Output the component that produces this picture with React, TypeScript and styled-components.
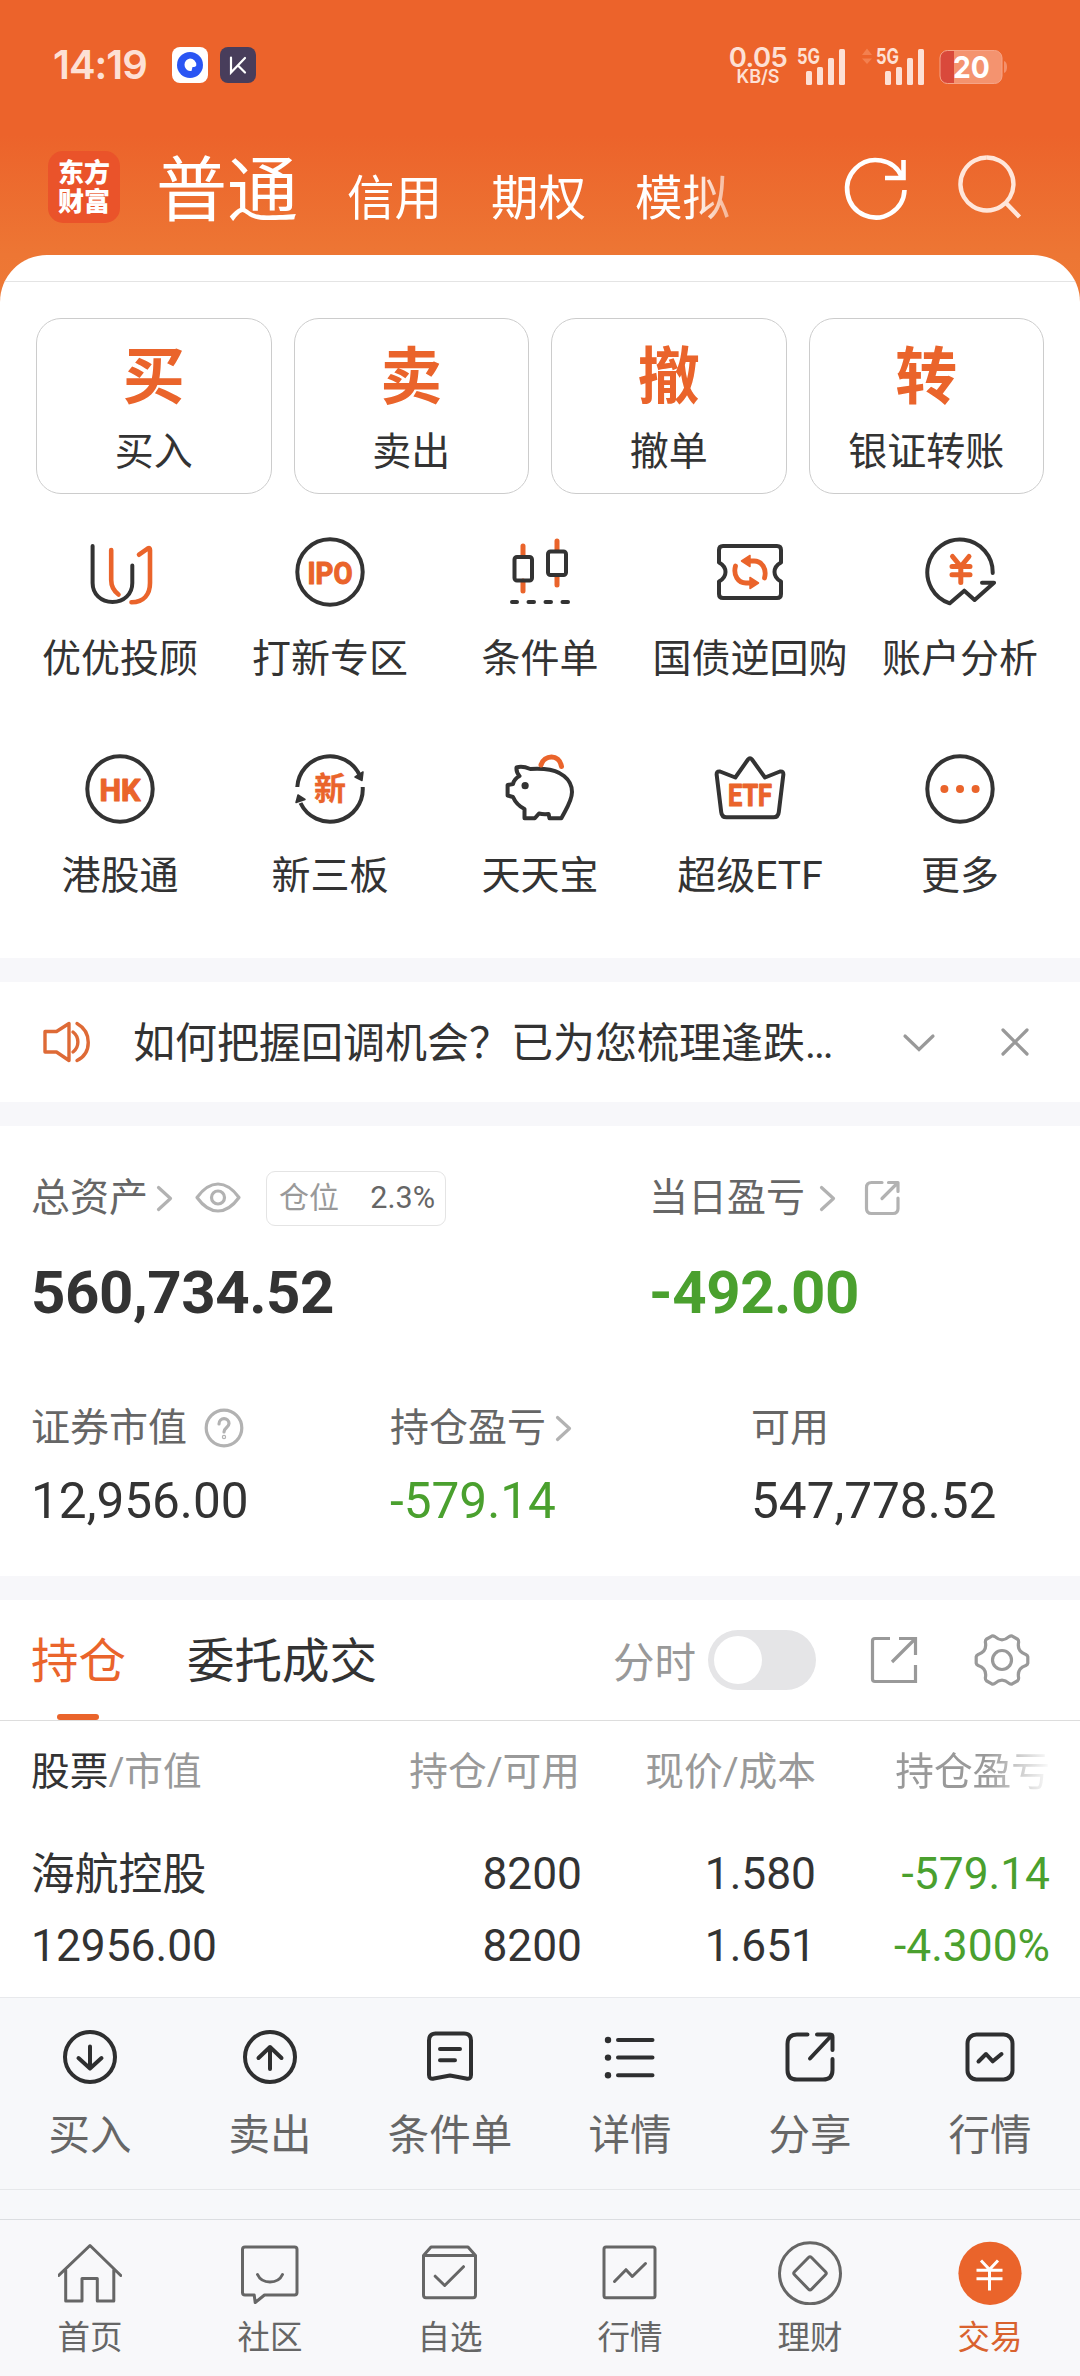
import React from "react";
import styled, { createGlobalStyle, css } from "styled-components";

const ORANGE = "#ea642b";
const INK = "#333";
const GREEN = "#4aa02e";

const Global = createGlobalStyle`
  * { box-sizing: border-box; }
  body {
    margin: 0;
    background: #f8f8fa;
    color: ${INK};
    font-family: Roboto, "Noto Sans CJK SC", sans-serif;
  }
`;

const Page = styled.div`
  width: 1080px;
  height: 2376px;
  display: flex;
  flex-direction: column;
  overflow: hidden;
  background: linear-gradient(#ec632b 0, #ec632b 135px, #ed7634 255px, #ee7a36 310px, #f8f8fa 311px);
`;

/* ---------- status bar ---------- */

const StatusBar = styled.div`
  height: 130px;
  padding: 0 73px 0 53px;
  display: flex;
  align-items: center;
  justify-content: space-between;
  color: #fde0d5;
  font-family: Inter, sans-serif;
`;

const StatusGroup = styled.div`
  display: flex;
  align-items: center;
`;

const Clock = styled.span`
  width: 119px;
  font-size: 40px;
  line-height: 40px;
  font-weight: 600;
  letter-spacing: -1px;
`;

const AppBadge = styled.svg`
  width: 36px;
  height: 36px;
  margin-right: 12px;
`;

const NetSpeed = styled.div`
  width: 64px;
  display: flex;
  flex-direction: column;
  align-items: center;
  font-weight: 600;
`;

const SpeedValue = styled.span`
  font-size: 27.5px;
  line-height: 22px;
  letter-spacing: -0.6px;
`;

const SpeedUnit = styled.span`
  font-size: 18px;
  line-height: 17px;
`;

const SignalIcon = styled.svg<{ $gap: number }>`
  width: 64px;
  height: 40px;
  margin-left: ${(p) => p.$gap}px;
  overflow: visible;
`;

const Battery = styled.svg`
  width: 68px;
  height: 40px;
  margin-left: 14px;
  overflow: visible;
`;

/* ---------- header ---------- */

const Header = styled.header`
  height: 125px;
  padding: 0 56px 0 48px;
  display: flex;
  align-items: flex-start;
`;

const Logo = styled.div`
  flex: none;
  width: 72px;
  height: 72px;
  margin-top: 21px;
  padding-top: 8px;
  border-radius: 15px;
  background: #ea532a;
  color: #fff;
  text-align: center;
  font-size: 26px;
  line-height: 29px;
  font-weight: 900;
`;

const HeaderTabs = styled.nav`
  width: 681px;
  flex: none;
  margin-left: 36px;
  padding-top: 16px;
  display: flex;
  align-items: baseline;
  color: #fff;
  mask-image: linear-gradient(to right, #000 535px, transparent 610px);
`;

const HeaderTab = styled.span<{ $active?: boolean }>`
  font-size: ${(p) => (p.$active ? 71 : 47.5)}px;
  line-height: 90px;
  margin-right: ${(p) => (p.$active ? 49 : 49)}px;
  white-space: nowrap;
`;

const HeaderIcon = styled.svg<{ $left: number }>`
  flex: none;
  width: 72px;
  height: 72px;
  margin-top: 23px;
  margin-left: ${(p) => p.$left}px;
`;

/* ---------- shared sheet parts ---------- */

const Sheet = styled.main`
  height: 1742px;
  flex: none;
  border-radius: 47px 47px 0 0;
  overflow: hidden;
  background: #fff;
`;

const TopEdge = styled.div`
  height: 27px;
  border-bottom: 1px solid #e4e4e4;
`;

const Band = styled.div`
  height: 24px;
  background: #f7f7fa;
`;

/* ---------- primary actions ---------- */

const ActionRow = styled.section`
  display: grid;
  grid-template-columns: repeat(4, 1fr);
  gap: 22px;
  padding: 36px 36px 0;
`;

const ActionCard = styled.button`
  height: 176px;
  padding: 24px 0 0;
  border: 1px solid #ccc;
  border-radius: 25px;
  background: #fff;
  color: ${INK};
  font-family: inherit;
  display: flex;
  flex-direction: column;
  align-items: center;
`;

const ActionGlyph = styled.span`
  color: ${ORANGE};
  font-size: 62px;
  line-height: 70px;
  font-weight: 700;
`;

const ActionLabel = styled.span`
  margin-top: 17px;
  font-size: 39px;
  line-height: 44px;
`;

const ShortcutGrid = styled.section`
  height: 464px;
  padding: 42px 15px 0;
  display: grid;
  grid-template-columns: repeat(5, 210px);
  grid-auto-rows: 217px;
`;

const Shortcut = styled.div`
  display: flex;
  flex-direction: column;
  align-items: center;
`;

const ShortcutIcon = styled.svg`
  width: 72px;
  height: 72px;
  fill: none;
  stroke: ${INK};
  stroke-width: 4;
  stroke-linecap: round;
  stroke-linejoin: round;
`;

const ShortcutLabel = styled.span`
  margin-top: 29px;
  font-size: 39px;
  line-height: 44px;
  white-space: nowrap;
`;

const IconWord = styled.text<{ $outline: number }>`
  fill: ${ORANGE};
  stroke: ${ORANGE};
  stroke-width: ${(p) => p.$outline};
  font-weight: 700;
  text-anchor: middle;
`;

/* ---------- notice ---------- */

const Notice = styled.section`
  height: 120px;
  padding: 0 48px 0 42px;
  display: flex;
  align-items: center;
`;

const NoticeIcon = styled.svg`
  flex: none;
  width: 48px;
  height: 48px;
`;

const NoticeText = styled.span`
  width: 768px;
  flex: none;
  margin-left: 43px;
  padding-top: 3px;
  font-size: 42px;
  line-height: 60px;
  white-space: nowrap;
`;

const Dots = styled.span`
  letter-spacing: -2.2px;
`;

const NoticeControl = styled.svg<{ $gap?: number }>`
  flex: none;
  width: 36px;
  height: 36px;
  margin-right: ${(p) => p.$gap || 0}px;
`;

/* ---------- assets ---------- */

const Assets = styled.section`
  height: 450px;
  padding: 45px 0 0 31px;
`;

const AssetTop = styled.div`
  display: grid;
  grid-template-columns: 618px 1fr;
`;

const AssetBottom = styled.div`
  display: grid;
  grid-template-columns: 359px 361px 1fr;
  margin-top: 80.5px;
`;

const AssetLabel = styled.div<{ $h: number }>`
  height: ${(p) => p.$h}px;
  display: flex;
  align-items: center;
  color: #666;
  font-size: 39px;
  line-height: ${(p) => p.$h}px;
`;

const SmallIcon = styled.svg<{ $w: number; $gap: number }>`
  width: ${(p) => p.$w}px;
  height: 44px;
  margin-left: ${(p) => p.$gap}px;
  fill: none;
  stroke: #b2b2b2;
  stroke-width: 3.2;
  stroke-linecap: round;
  stroke-linejoin: round;
`;

const PositionTag = styled.div`
  width: 180px;
  height: 55px;
  margin-left: 25px;
  padding: 0 10px 0 12px;
  display: flex;
  align-items: center;
  justify-content: space-between;
  border: 1px solid #e4e4e4;
  border-radius: 9px;
  color: #999;
  font-size: 30px;
`;

const PositionRate = styled.span`
  color: #666;
  font-size: 30.5px;
`;

const Total = styled.div<{ $down?: boolean }>`
  margin-top: 38px;
  font-size: 60px;
  line-height: 60px;
  font-weight: 700;
  letter-spacing: -0.45px;
  color: ${(p) => (p.$down ? GREEN : INK)};
`;

const Amount = styled.div<{ $down?: boolean }>`
  margin-top: 24.5px;
  font-size: 49.5px;
  line-height: 50px;
  color: ${(p) => (p.$down ? GREEN : INK)};
`;

/* ---------- holdings ---------- */

const HoldTabs = styled.div`
  height: 121px;
  padding-left: 31px;
  display: flex;
  border-bottom: 1px solid #ddd;
`;

const HoldTab = styled.div<{ $active?: boolean }>`
  position: relative;
  margin-right: 61px;
  font-size: 47.5px;
  line-height: 124px;
  color: ${(p) => (p.$active ? ORANGE : INK)};
  ${(p) =>
    p.$active &&
    css`
      &::after {
        content: "";
        position: absolute;
        left: 26px;
        bottom: 0;
        width: 42px;
        height: 6px;
        border-radius: 3px;
        background: ${ORANGE};
      }
    `}
`;

const HoldTools = styled.div`
  margin-left: auto;
  padding-right: 48px;
  display: flex;
  align-items: center;
  color: #999;
  font-size: 41.5px;
`;

const Toggle = styled.div`
  width: 108px;
  height: 60px;
  margin-left: 12px;
  padding: 6px;
  border-radius: 30px;
  background: #e5e5e7;
`;

const Knob = styled.div`
  width: 48px;
  height: 48px;
  border-radius: 50%;
  background: #fff;
`;

const ToolIcon = styled.svg<{ $gap: number }>`
  width: 60px;
  height: 60px;
  margin-left: ${(p) => p.$gap}px;
  fill: none;
  stroke: #999;
  stroke-width: 3.2;
`;

const HoldTable = styled.div`
  padding: 0 30px 0 31px;
`;

const HoldRow = styled.div<{ $kind: "head" | "top" | "bottom" }>`
  display: grid;
  grid-template-columns: 300px 249px 234px 236px;
  text-align: right;
  white-space: nowrap;
  ${(p) =>
    p.$kind === "head"
      ? css`height: 100px; line-height: 101px; font-size: 38.7px; color: #999;`
      : css`
          height: 72px;
          line-height: 72px;
          font-size: 44.3px;
          margin-top: ${p.$kind === "top" ? 16.5 : 0}px;
        `}
`;

const Cell = styled.span<{ $left?: boolean; $down?: boolean; $name?: boolean; $mid?: boolean }>`
  text-align: ${(p) => (p.$left ? "left" : "right")};
  ${(p) => p.$down && css`color: ${GREEN};`}
  ${(p) => p.$name && css`font-size: 43.8px; line-height: 75px;`}
  ${(p) => p.$mid && css`margin-right: -2px;`}
`;

const Strong = styled.b`
  color: ${INK};
  font-weight: 400;
`;

const FadedHead = styled(Cell)`
  mask-image: linear-gradient(to right, #000 172px, transparent 238px);
`;

/* ---------- bottom bars ---------- */

const Bar = styled.div<{ $kind: "tools" | "tabs" }>`
  display: grid;
  grid-template-columns: repeat(6, 180px);
  flex: none;
  ${(p) =>
    p.$kind === "tools"
      ? css`
          height: 193px;
          padding-top: 27px;
          border-top: 1px solid #e8e9ec;
          border-bottom: 1px solid #e6e8ea;
          background: #f7f8fa;
        `
      : css`
          height: 157px;
          margin-top: 29px;
          padding-top: 21px;
          border-top: 1px solid #dcdee1;
          background: #f8f8fa;
        `}
`;

const BarItem = styled.div<{ $active?: boolean }>`
  display: flex;
  flex-direction: column;
  align-items: center;
  color: ${(p) => (p.$active ? "#d9622e" : "#666")};
`;

const BarIcon = styled.svg<{ $stroke: string; $w: number }>`
  width: 64px;
  height: 64px;
  fill: none;
  stroke: ${(p) => p.$stroke};
  stroke-width: ${(p) => p.$w};
  stroke-linecap: round;
  stroke-linejoin: round;
`;

const BarLabel = styled.span<{ $size: number; $gap: number }>`
  margin-top: ${(p) => p.$gap}px;
  font-size: ${(p) => p.$size}px;
  line-height: 44px;
`;

const Footer = styled.footer`
  flex: 1;
  background: #f7f8fa;
`;

/* ---------- icon content ---------- */

const Ring = () => <circle r="32.7" />;

const shortcuts: { label: string; icon: React.ReactNode }[] = [
  {
    label: "优优投顾",
    icon: (
      <>
        <path d="M-27.4-26V11C-27.4 22-19 30-7.5 30S12.3 22 12.3 11V-6.5" />
        <g stroke={ORANGE}>
          <path d="M-8.8-22V8Q-8.8 17-1.5 22.5M19-17.3L28-23.6Q30-24.6 30-22V11C30 22 24 30 11.5 30.3" strokeWidth="4.6" />
        </g>
      </>
    ),
  },
  {
    label: "打新专区",
    icon: (
      <>
        <Ring />
        <IconWord $outline={1.2} y="11.5" fontSize="32" textLength="45" lengthAdjust="spacingAndGlyphs">IPO</IconWord>
      </>
    ),
  },
  {
    label: "条件单",
    icon: (
      <>
        <path stroke={ORANGE} strokeWidth="5" strokeLinecap="round" d="M-17-26V-17M-17 9V19M17-31V-22M17 4V13" />
        <rect x="-25.5" y="-15" width="17.5" height="23.5" rx="2.5" />
        <rect x="8" y="-20.5" width="18" height="23.5" rx="2.5" />
        <path d="M-28 30H-23M-11.500 30H-6M5.500 30H11M22.500 30H28" />
      </>
    ),
  },
  {
    label: "国债逆回购",
    icon: (
      <>
        <path d="M-27-26H27Q31-26 31-22V-9.500Q24.500-6 24.500 0T31 9.500V22Q31 26 27 26H-27Q-31 26-31 22V9.500Q-24.500 6-24.500 0T-31-9.500V-22Q-31-26-27-26Z" />
        <g stroke={ORANGE} strokeWidth="4.8">
          <path d="M-1-11H4C12-11 17-3 14.500 6M1 11H-4C-12 11-17 3-14.500-6" />
          <path fill={ORANGE} strokeWidth="1.500" d="M-8.500-11L0-16.500V-5.500ZM8.500 11L0 5.500V16.500Z" />
        </g>
      </>
    ),
  },
  {
    label: "账户分析",
    icon: (
      <>
        <path d="M32.700 1A32.700 32.700 0 1 0-10.200 31.300L4.300 18.700L14.600 28L34 10.700H22" />
        <path stroke={ORANGE} strokeWidth="5" d="M-7.500-15.500L.8-5.500L9-15.500M.8-5.500V10.500M-8-5.500H10M-8 2.800H10" />
      </>
    ),
  },
  {
    label: "港股通",
    icon: (
      <>
        <Ring />
        <IconWord $outline={1.2} y="11.5" fontSize="32" textLength="41" lengthAdjust="spacingAndGlyphs">HK</IconWord>
      </>
    ),
  },
  {
    label: "新三板",
    icon: (
      <>
        <path strokeLinecap="butt" d="M-32.700-2A32.700 32.700 0 0 1 29.500-14M32.700-2A32.700 32.700 0 0 1-29.500 14" />
        <path fill={INK} strokeWidth="1.500" d="M25-12L33-17L32-8.500ZM-25 10.500L-32 6L-34 13.500Z" />
        <IconWord $outline={0.3} y="10.500" fontSize="32">新</IconWord>
      </>
    ),
  },
  {
    label: "天天宝",
    icon: (
      <>
        <path d="M-23.500-21.500Q-18-23.500-9.700-20Q-3-20.500 4-20C20-19 32-10 32 3C32 12 26 20 21.300 29.300H9.500L8.600 25Q3 25.500-1 24.500L-5.200 29.300H-15.500V20Q-23.500 16-27 8L-32.400 6.500V-4L-27-5Q-26-10-20.500-13Q-24-17-23.500-21.500Z" />
        <circle cx="-14.900" cy="-3.300" r="3.600" fill={INK} stroke="none" />
        <path stroke={ORANGE} strokeWidth="5" d="M1-24C4-34 19-36 21.500-22.500" />
      </>
    ),
  },
  {
    label: "超级ETF",
    icon: (
      <>
        <path d="M-30-17.500L-14.700-11.500L-2-29.500Q0-32 2-29.500L15-11.500L30-17.500Q33.800-18 33.300-14L28.800 23Q28.300 28.300 23.500 28.300H-23.500Q-28.300 28.300-28.800 23L-33.300-14Q-33.800-18-30-17.500Z" />
        <IconWord $outline={1.2} y="17.2" fontSize="31" textLength="44" lengthAdjust="spacingAndGlyphs">ETF</IconWord>
      </>
    ),
  },
  {
    label: "更多",
    icon: (
      <>
        <Ring />
        <g fill={ORANGE} stroke="none">
          <circle cx="-15.600" r="4" />
          <circle r="4" />
          <circle cx="15.600" r="4" />
        </g>
      </>
    ),
  },
];

const tools: { label: string; icon: React.ReactNode }[] = [
  { label: "买入", icon: <><circle r="25" /><path d="M0-10.500V11M-11.500 1L0 11.500L11.500 1" /></> },
  { label: "卖出", icon: <><circle r="25" /><path d="M0-10V12M-11.500 1L0-10L11.500 1" /></> },
  {
    label: "条件单",
    icon: <path d="M-15-23.500H14Q21-23.500 21-16.500V18Q21 22.500 16 21.500L0 18.500L-16 21.500Q-21 22.500-21 18V-16.500Q-21-23.500-14-23.500ZM-10-8H10M-10 3.300H5" />,
  },
  {
    label: "详情",
    icon: (
      <>
        <path d="M-12-17H22.500M-12 .6H22.500M-12 18.300H22.500" />
        <g fill="#2e2f30" stroke="none"><circle cx="-22" cy="-17" r="3.200" /><circle cx="-22" cy=".6" r="3.200" /><circle cx="-22" cy="18.300" r="3.200" /></g>
      </>
    ),
  },
  {
    label: "分享",
    icon: <path d="M-2.500-22.600H-13Q-22.500-22.600-22.500-13V13Q-22.500 22.600-13 22.600H13Q22.500 22.600 22.500 13V2M7-22.600H20Q22.500-22.600 22.500-20V-7M0 1.500L22-22" />,
  },
  {
    label: "行情",
    icon: <><rect x="-22.500" y="-22.600" width="45" height="45" rx="9" /><path d="M-11.500 4.500L-4-3L2.800 4.300L11.500-3" /></>,
  },
];

const tabs: { label: string; icon: React.ReactNode; active?: boolean }[] = [
  { label: "首页", icon: <path d="M-31.300 2.500L0-27.500L30.800 2.500M-24.300-3V28H-8V5.500H7.300V28H23.800V-3" /> },
  {
    label: "社区",
    icon: <path d="M-25-26H24.500Q27-26 27-23.500V19.500Q27 22 24.500 22H-5.500L-14.800 29.500L-15.800 22H-25Q-27.500 22-27.500 19.500V-23.500Q-27.500-26-25-26ZM-12.500 1.500C-8 11.500 8 11.500 12.500 1.500" />,
  },
  {
    label: "自选",
    icon: <path d="M-26.500-17.500L-19-26H18L25.500-17.500V22Q25.500 24.700 23 24.700H-24Q-26.500 24.700-26.500 22V-17.500H25.500M-14.800 3.200L-5.300 12.500L13.500-6.300" />,
  },
  { label: "行情", icon: <><rect x="-26" y="-26" width="51" height="50.700" rx="2" /><path d="M-15.500 8.500L-4-3.300L2.300 3.500L15.500-9.500" /></> },
  {
    label: "理财",
    icon: <><circle cy=".3" r="30.500" /><path d="M-1.500-15.500Q0-17 1.500-15.500L15.500-1.200Q17 .3 15.500 1.800L1.500 16.200Q0 17.700-1.500 16.200L-15.500 1.800Q-17 .3-15.500-1.200Z" /></>,
  },
  {
    label: "交易",
    active: true,
    icon: (
      <>
        <circle cy=".3" r="31.600" fill={ORANGE} stroke="none" />
        <path stroke="#fff" strokeLinecap="butt" d="M-9-12.500L-.5-3.500L8-12.500M-.5-3.500V17.500M-13.500-2.700H12.500M-13.500 5.800H12.500" />
      </>
    ),
  },
];

const actions = [["买", "买入"], ["卖", "卖出"], ["撤", "撤单"], ["转", "银证转账"]];

function Signal({ gap, arrows }: { gap: number; arrows?: boolean }) {
  return (
    <SignalIcon viewBox="0 0 64 40" $gap={gap} fill="#fde0d5">
      {arrows && <path fill="#f3804f" d="M1 10L6 3.500L11 10ZM1 13.500H11L6 19Z" />}
      <text x="15" y="18.500" fontSize="21.500" fontWeight="700" textLength="23" lengthAdjust="spacingAndGlyphs">5G</text>
      <rect x="24" y="26" width="6" height="14" rx="1.500" />
      <rect x="35" y="22" width="6" height="18" rx="1.500" />
      <rect x="46" y="13" width="6" height="27" rx="1.500" />
      <rect x="57" y="4" width="6" height="36" rx="1.500" />
    </SignalIcon>
  );
}

const Chevron = ({ gap }: { gap: number }) => (
  <SmallIcon viewBox="0 0 18 44" $w={18} $gap={gap}><path d="M2.500 11.500L14.500 22.500L2.500 33.500" /></SmallIcon>
);

/* Closed outline of a six-lobed cog centred on the origin. */
const cog = Array.from({ length: 6 }, (_, i) => {
  const at = (deg: number, r: number) => {
    const a = ((i * 60 + deg) * Math.PI) / 180;
    return `${(r * Math.cos(a)).toFixed(2)} ${(r * Math.sin(a)).toFixed(2)}`;
  };
  return `${i ? "L" : "M"}${at(-7, 26)}L${at(7, 26)}Q${at(10, 26)} ${at(13, 24.4)}Q${at(30, 17)} ${at(47, 24.4)}Q${at(50, 26)} ${at(53, 26)}`;
}).join("") + "Z";

export default function App() {
  return (
    <Page>
      <Global />
      <StatusBar>
        <StatusGroup>
          <Clock>14:19</Clock>
          <AppBadge viewBox="0 0 36 36">
            <rect width="36" height="36" rx="8" fill="#fff" />
            <circle cx="18" cy="18" r="13" fill="#2a55f3" />
            <path fill="#fff" d="M18 11.500A6.300 6.300 0 0 1 24.300 18Q24.300 20 20.500 20L19.500 24H18A6.300 6.300 0 0 1 18 11.500Z" />
          </AppBadge>
          <AppBadge viewBox="0 0 36 36">
            <rect width="36" height="36" rx="8" fill="#483d5b" />
            <path fill="none" stroke="#fff" strokeWidth="2.200" strokeLinecap="round" d="M11 10.500V25.500L25 11M18 18.500L25 25.500" />
          </AppBadge>
        </StatusGroup>
        <StatusGroup>
          <NetSpeed>
            <SpeedValue>0.05</SpeedValue>
            <SpeedUnit>KB/S</SpeedUnit>
          </NetSpeed>
          <Signal gap={-8} />
          <Signal gap={15} arrows />
          <Battery viewBox="0 0 68 40">
            <path fill="#f4906b" d="M65 16Q68 17 68 22T65 28Z" />
            <rect x="1" y="5.500" width="62" height="33" rx="7.500" fill="#f4936f" />
            <path fill="#d9493b" d="M15 5.500V38.500H8.500Q1 38.500 1 31V13Q1 5.500 8.500 5.500Z" />
            <rect x="1" y="5.500" width="62" height="33" rx="7.500" fill="none" stroke="#f6a487" strokeWidth="1" />
            <text x="14" y="33" fontSize="30.500" fontWeight="700" fill="#fff" textLength="37" lengthAdjust="spacingAndGlyphs">20</text>
          </Battery>
        </StatusGroup>
      </StatusBar>

      <Header>
        <Logo>东方<br />财富</Logo>
        <HeaderTabs>
          <HeaderTab $active>普通</HeaderTab>
          <HeaderTab>信用</HeaderTab>
          <HeaderTab>期权</HeaderTab>
          <HeaderTab>模拟</HeaderTab>
        </HeaderTabs>
        <HeaderIcon viewBox="-36 -36 72 72" $left={3} fill="none" stroke="#fff" strokeWidth="4.600">
          <path d="M28.500 1A28.700 28.700 0 1 1 26-12M27.500-29V-11H9" />
        </HeaderIcon>
        <HeaderIcon viewBox="-36 -36 72 72" $left={40} fill="none" stroke="#ffe6da" strokeWidth="4.400">
          <path d="M-1-31.500A26.500 26.500 0 1 1-1.100-31.500M17.500 13.500L31.500 28" />
        </HeaderIcon>
      </Header>

      <Sheet>
        <TopEdge />
        <ActionRow>
          {actions.map(([glyph, label]) => (
            <ActionCard key={label}>
              <ActionGlyph>{glyph}</ActionGlyph>
              <ActionLabel>{label}</ActionLabel>
            </ActionCard>
          ))}
        </ActionRow>
        <ShortcutGrid>
          {shortcuts.map((s) => (
            <Shortcut key={s.label}>
              <ShortcutIcon viewBox="-36 -36 72 72">{s.icon}</ShortcutIcon>
              <ShortcutLabel>{s.label}</ShortcutLabel>
            </Shortcut>
          ))}
        </ShortcutGrid>

        <Band />
        <Notice>
          <NoticeIcon viewBox="0 0 48 48" fill="none" stroke="#de6a36" strokeWidth="3.400" strokeLinejoin="round" strokeLinecap="round">
            <path d="M3 13.500H14.500L27 5.500V42.500L14.500 34H3ZM31 14C37.500 19 37.500 29 31 34M35 5.500C50 14 50 35 35 42.500" />
          </NoticeIcon>
          <NoticeText>如何把握回调机会？已为您梳理逢跌<Dots>...</Dots></NoticeText>
          <NoticeControl viewBox="-18 -18 36 36" $gap={60} fill="none" stroke="#999" strokeWidth="3.200" strokeLinecap="round">
            <path d="M-14-6L0 7.500L14-6" />
          </NoticeControl>
          <NoticeControl viewBox="-18 -18 36 36" fill="none" stroke="#999" strokeWidth="3.200" strokeLinecap="round">
            <path d="M-12-12L12 12M12-12L-12 12" />
          </NoticeControl>
        </Notice>
        <Band />

        <Assets>
          <AssetTop>
            <div>
              <AssetLabel $h={54}>
                总资产
                <Chevron gap={8} />
                <SmallIcon viewBox="0 0 46 44" $w={46} $gap={21}>
                  <path d="M2 21.500C15 3.500 31 3.500 44 21.500C31 39.500 15 39.500 2 21.500Z" />
                  <circle cx="23" cy="21.500" r="6.500" />
                </SmallIcon>
                <PositionTag>仓位<PositionRate>2.3%</PositionRate></PositionTag>
              </AssetLabel>
              <Total>560,734.52</Total>
            </div>
            <div>
              <AssetLabel $h={54}>
                当日盈亏
                <Chevron gap={14} />
                <SmallIcon viewBox="0 0 36 44" $w={36} $gap={27} strokeLinecap="butt">
                  <path d="M18 6.500H7.500Q2.500 6.500 2.500 11.500V32.500Q2.500 37.500 7.500 37.500H29Q34 37.500 34 32.500V22M24.500 6.500H34V15.500M33.500 7L18 22.500" />
                </SmallIcon>
              </AssetLabel>
              <Total $down>-492.00</Total>
            </div>
          </AssetTop>
          <AssetBottom>
            <div>
              <AssetLabel $h={48}>
                证券市值
                <SmallIcon viewBox="0 0 40 44" $w={40} $gap={17}>
                  <circle cx="20" cy="22" r="17.800" />
                  <path d="M15 18C15 11 25 11 25 17.500C25 21.500 20 21.500 20 26" />
                  <circle cx="20" cy="31" r=".6" />
                </SmallIcon>
              </AssetLabel>
              <Amount>12,956.00</Amount>
            </div>
            <div>
              <AssetLabel $h={48}>持仓盈亏<Chevron gap={9} /></AssetLabel>
              <Amount $down>-579.14</Amount>
            </div>
            <div>
              <AssetLabel $h={48}>可用</AssetLabel>
              <Amount>547,778.52</Amount>
            </div>
          </AssetBottom>
        </Assets>

        <Band />
        <HoldTabs>
          <HoldTab $active>持仓</HoldTab>
          <HoldTab>委托成交</HoldTab>
          <HoldTools>
            分时
            <Toggle><Knob /></Toggle>
            <ToolIcon viewBox="-30 -30 60 60" $gap={48}>
              <path d="M-4-21.500H-19Q-21.500-21.500-21.500-19V19Q-21.500 21.500-19 21.500H21.500V5M5-21.500H21.500V-5M-2 2L21-21" />
            </ToolIcon>
            <ToolIcon viewBox="-30 -30 60 60" $gap={48} strokeLinejoin="round">
              <path d={cog} />
              <circle r="9.500" />
            </ToolIcon>
          </HoldTools>
        </HoldTabs>
        <HoldTable>
          <HoldRow $kind="head">
            <Cell $left><Strong>股票</Strong>/市值</Cell>
            <Cell>持仓/可用</Cell>
            <Cell $mid>现价/成本</Cell>
            <FadedHead>持仓盈亏</FadedHead>
          </HoldRow>
          <HoldRow $kind="top">
            <Cell $left $name>海航控股</Cell>
            <Cell $mid>8200</Cell>
            <Cell $mid>1.580</Cell>
            <Cell $down>-579.14</Cell>
          </HoldRow>
          <HoldRow $kind="bottom">
            <Cell $left>12956.00</Cell>
            <Cell $mid>8200</Cell>
            <Cell $mid>1.651</Cell>
            <Cell $down>-4.300%</Cell>
          </HoldRow>
        </HoldTable>
      </Sheet>

      <Bar $kind="tools">
        {tools.map((t) => (
          <BarItem key={t.label}>
            <BarIcon viewBox="-32 -32 64 64" $stroke="#2e2f30" $w={4}>{t.icon}</BarIcon>
            <BarLabel $size={41.5} $gap={25}>{t.label}</BarLabel>
          </BarItem>
        ))}
      </Bar>
      <Footer>
        <Bar $kind="tabs">
          {tabs.map((t) => (
            <BarItem key={t.label} $active={t.active}>
              <BarIcon viewBox="-32 -32 64 64" $stroke="#666" $w={3}>{t.icon}</BarIcon>
              <BarLabel $size={32.5} $gap={11}>{t.label}</BarLabel>
            </BarItem>
          ))}
        </Bar>
      </Footer>
    </Page>
  );
}
